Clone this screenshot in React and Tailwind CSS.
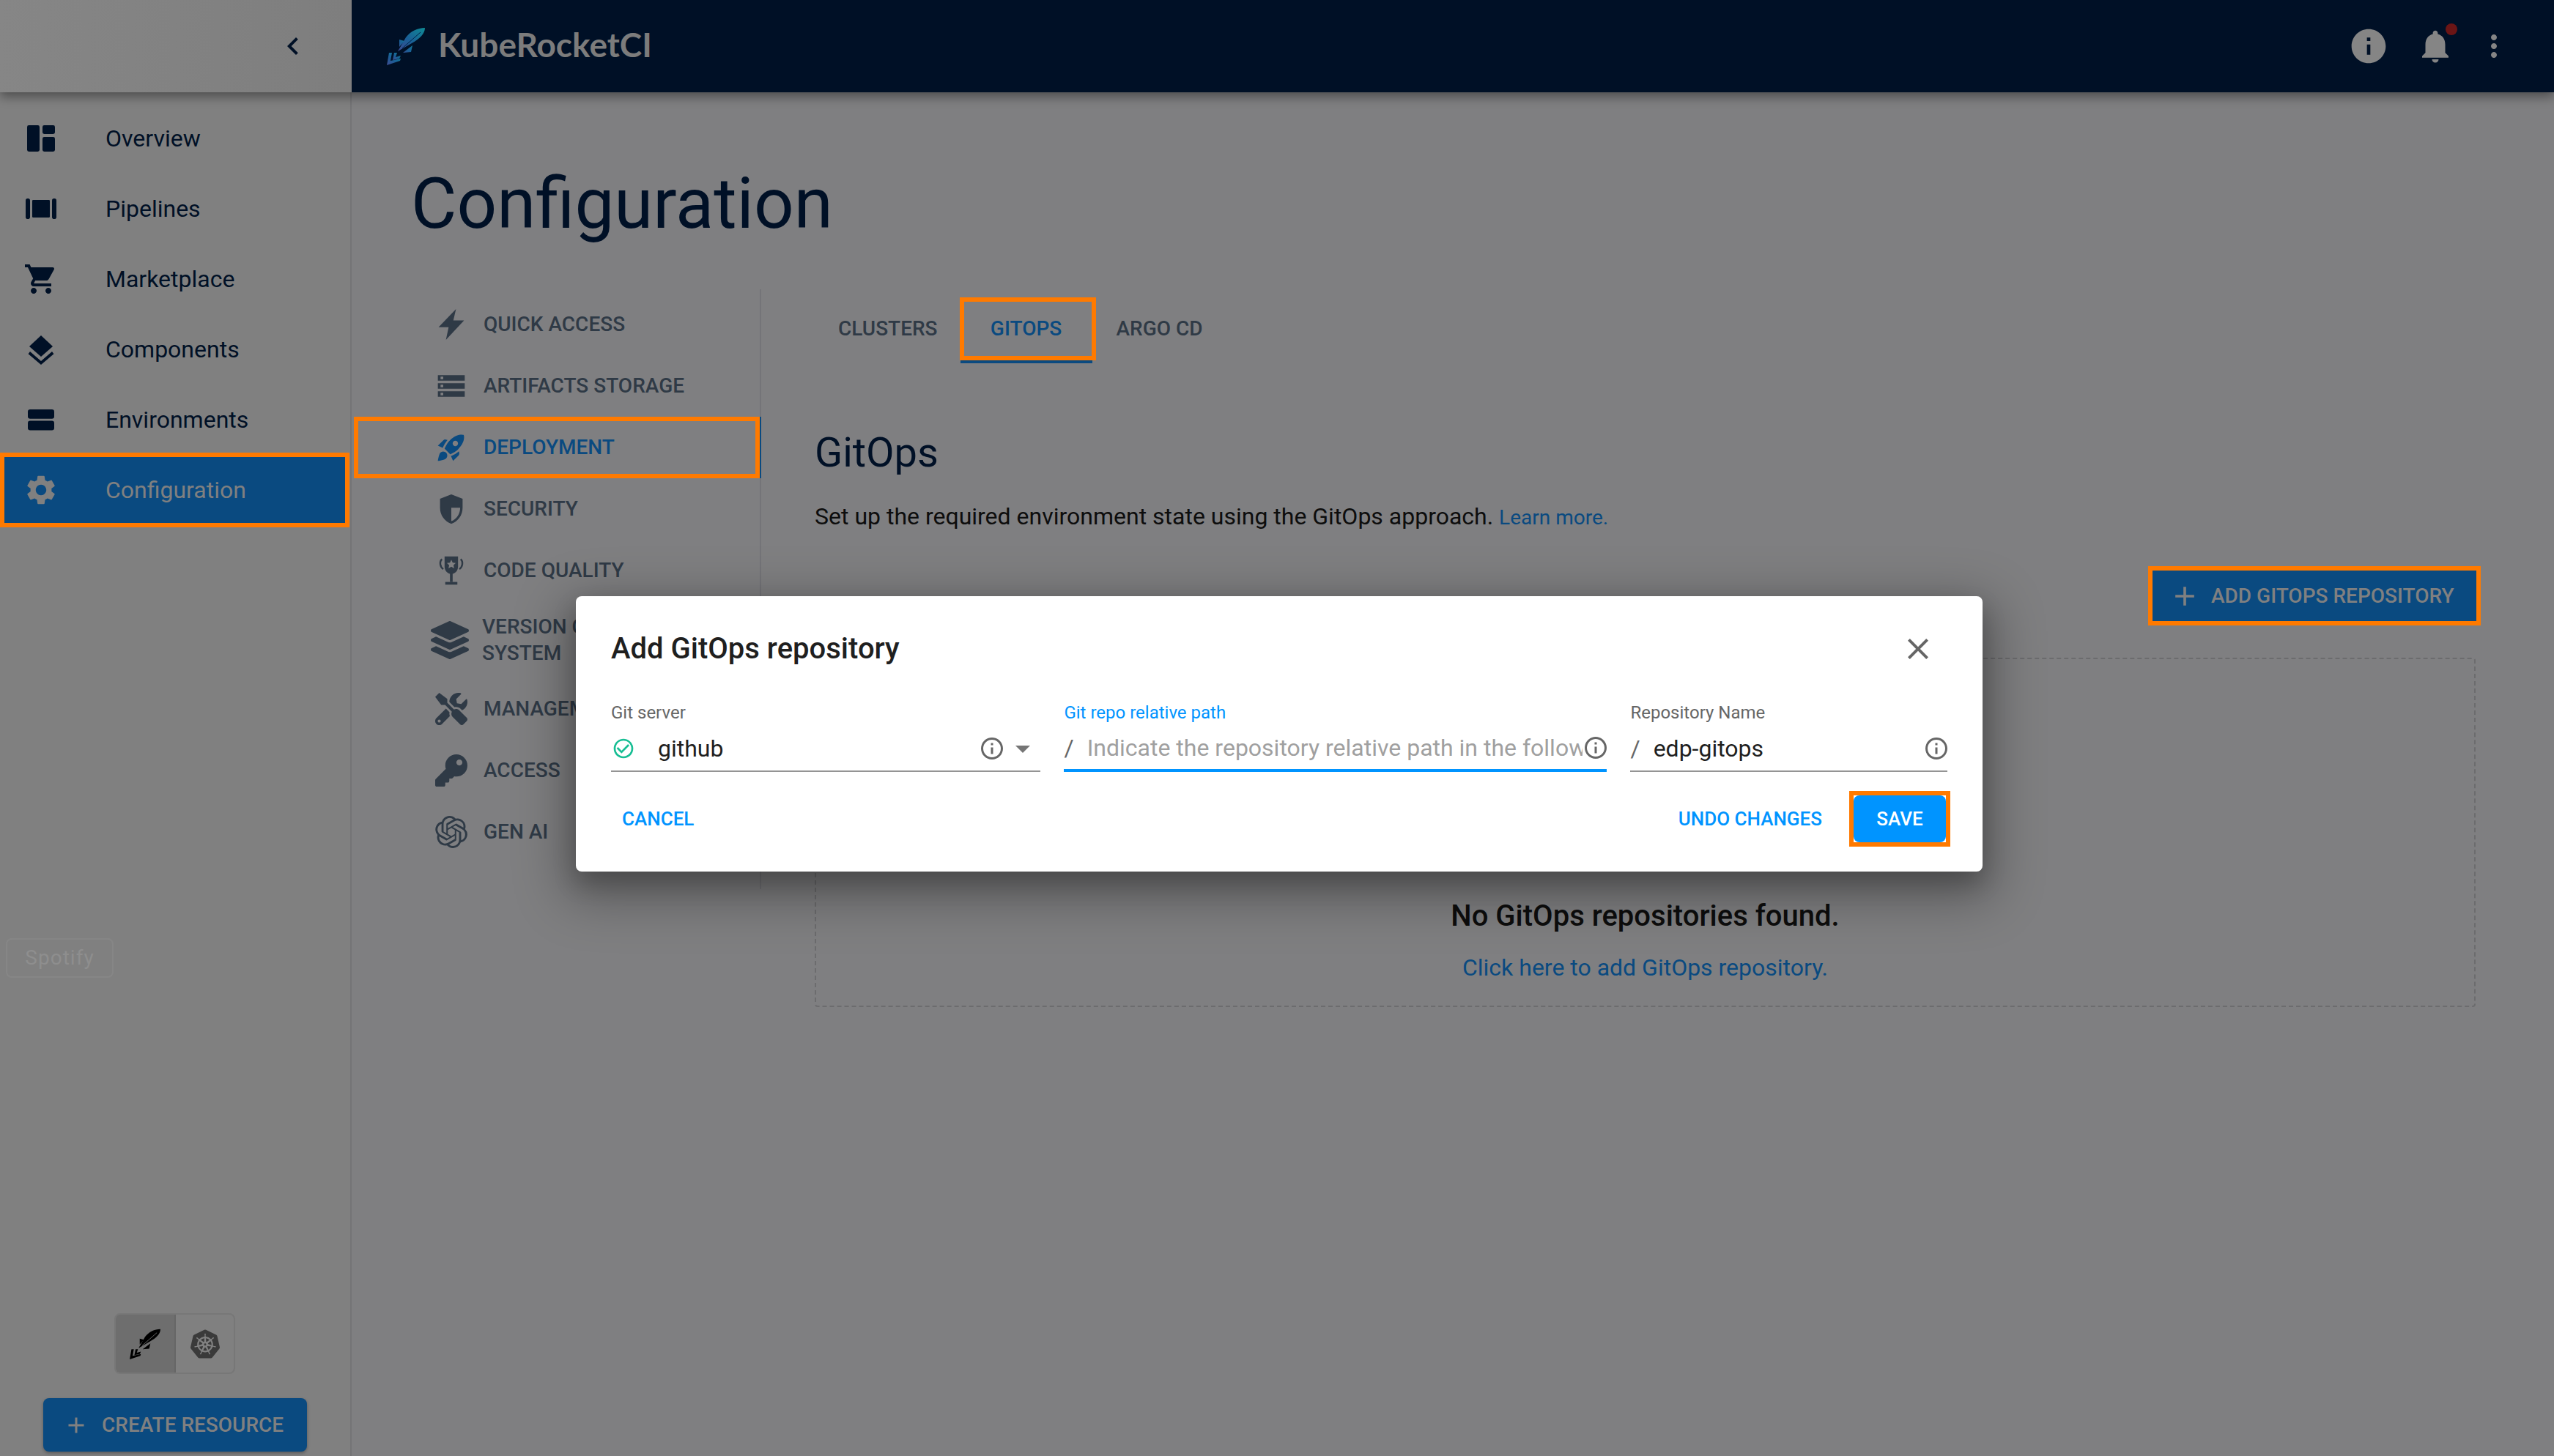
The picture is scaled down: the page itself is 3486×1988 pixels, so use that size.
// App.jsx — KubeRocketCI configuration page with the Add GitOps repository dialog open
import { MdAdd, MdCheckCircleOutline, MdChevronLeft, MdClose, MdInfo, MdInfoOutline, MdMoreVert, MdNotifications, MdRocketLaunch, MdSettings, MdShoppingCart, MdStorage, MdArrowDropDown } from 'react-icons/md';
import { FaKey, FaLayerGroup, FaTools } from 'react-icons/fa';
import { SiKubernetes, SiOpenai } from 'react-icons/si';

const DashboardIcon = ({ className }) => (
    <svg viewBox="0 0 24 24" fill="currentColor" className={className}>
        <rect x="2.5" y="3" width="8.5" height="18" rx="1.2" />
        <rect x="13" y="3" width="8.5" height="6" rx="1.2" />
        <rect x="13" y="11" width="8.5" height="10" rx="1.2" />
    </svg>
);

const PipelinesIcon = ({ className }) => (
    <svg viewBox="0 0 24 24" fill="currentColor" className={className}>
        <rect x="1.5" y="5" width="3" height="14" rx="1.4" />
        <rect x="6" y="6" width="12" height="12" rx="0.6" />
        <rect x="19.5" y="5" width="3" height="14" rx="1.4" />
    </svg>
);

const ComponentsIcon = ({ className }) => (
    <svg viewBox="0 0 24 24" fill="currentColor" className={className}>
        <path d="M12 2.5 20 10 12 17 4 10Z" />
        <path d="M4.5 13.5 12 20l7.5-6.5 1.2 1.6L12 22.5 3.3 15.1Z" />
    </svg>
);

const EnvironmentsIcon = ({ className }) => (
    <svg viewBox="0 0 24 24" fill="currentColor" className={className}>
        <rect x="3" y="5" width="18" height="6.4" rx="1.6" />
        <rect x="3" y="12.8" width="18" height="6.4" rx="1.6" />
    </svg>
);

const BoltIcon = ({ className }) => (
    <svg viewBox="0 0 24 24" fill="currentColor" className={className}>
        <path d="M15.500 0.500 2.500 14h7.500L8 23.500 21.500 9H13.500Z" />
    </svg>
);

const ShieldIcon = ({ className }) => (
    <svg viewBox="0 0 24 24" className={className}>
        <path d="M12 2 4.500 5v6c0 5 3 9.500 7.500 11 4.500-1.500 7.500-6 7.500-11V5Z" fill="none" stroke="currentColor" strokeWidth="1.800" />
        <path d="M12 2 4.500 5v6c0 5 3 9.500 7.500 11V11h7.500V5Z" fill="currentColor" />
    </svg>
);

const TrophyIcon = ({ className }) => (
    <svg viewBox="0 0 24 24" className={className}>
        <path d="M7 1.500h10V9c0 3.500-2.500 5.500-5 5.500S7 12.500 7 9Z" fill="currentColor" />
        <path d="M5 3.500C3 5.500 3.500 9 6 11M19 3.500c2 2 1.500 5.500-1 7.500" fill="none" stroke="currentColor" strokeWidth="1.300" />
        <rect x="11" y="14" width="2" height="6.500" fill="currentColor" />
        <rect x="7.500" y="20.500" width="9" height="2" fill="currentColor" />
        <path d="m12 4 1 2.200 2.300.2-1.700 1.600.5 2.300-2.100-1.200-2.100 1.200.5-2.300-1.700-1.600 2.300-.2Z" fill="#7f7f81" />
    </svg>
);

const RocketLogo = ({ className, mono }) => (
    <svg viewBox="0 0 52 52" className={className}>
        <defs>
            <linearGradient id="rocketFill" x1="1" y1="0" x2="0" y2="1">
                <stop offset="0" stopColor="#0f8a94" />
                <stop offset="0.55" stopColor="#1a5f96" />
                <stop offset="1" stopColor="#3f4a90" />
            </linearGradient>
        </defs>
        <g fill={mono ? '#000000' : 'url(#rocketFill)'}>
            <path d="M52 1C42 1 32 6 26 14L15 33l19-11C45 16 52 9 52 1Z" />
            <path d="M17 17l7 2-7 8ZM33 34l-11 1 13-10Z" />
            <path d="M3 35h4L5 46l14-3-1 3-18 6Z" />
            <path d="M10 35h4l-2 6 7-2-2 4-9 2Z" />
        </g>
        <path d="M21 29 46 7" stroke={mono ? '#7a7a7a' : '#00224a'} strokeWidth="1" />
    </svg>
);

const NAV_ITEMS = [
    { label: 'Overview', icon: DashboardIcon },
    { label: 'Pipelines', icon: PipelinesIcon },
    { label: 'Marketplace', icon: MdShoppingCart },
    { label: 'Components', icon: ComponentsIcon },
    { label: 'Environments', icon: EnvironmentsIcon },
];

const SUB_ITEMS = [
    { label: 'QUICK ACCESS', icon: BoltIcon },
    { label: 'ARTIFACTS STORAGE', icon: MdStorage },
    { label: 'DEPLOYMENT', icon: MdRocketLaunch, active: true },
    { label: 'SECURITY', icon: ShieldIcon },
    { label: 'CODE QUALITY', icon: TrophyIcon },
    { label: 'VERSION CONTROL SYSTEM', icon: FaLayerGroup, tall: true },
    { label: 'MANAGEMENT', icon: FaTools },
    { label: 'ACCESS', icon: FaKey },
    { label: 'GEN AI', icon: SiOpenai },
];

function Sidebar() {
    return (
        <aside className="w-[480px] shrink-0 h-full bg-[#808080] border-r-2 border-[#747476] flex flex-col">
            <nav className="flex flex-col pt-[15px]">
                {NAV_ITEMS.map(({ label, icon: Icon }) => (
                    <div key={label} className="h-[96px] flex items-center pl-[32px] text-[#001026]">
                        <Icon className="w-[48px] h-[48px]" />
                        <span className="ml-[64px] text-[32px]">{label}</span>
                    </div>
                ))}
                <div className="h-[102px] -mt-[3px] flex items-center pl-[26px] bg-[#0a4a80] border-[6px] border-[#ff7a00] text-[#808080] w-[477px]">
                    <MdSettings className="w-[48px] h-[48px]" />
                    <span className="ml-[64px] text-[32px]">Configuration</span>
                </div>
            </nav>

            <div className="flex-1 flex flex-col">
                <div className="mt-[561px] ml-[8px] w-[147px] h-[54px] rounded-lg border-2 border-[#868686] flex items-center justify-center">
                    <span className="text-[28px] tracking-[1px] text-[#8e8e8e]">Spotify</span>
                </div>
                <div className="mt-[458px] ml-[156px] w-[165px] h-[83px] flex rounded-lg border-2 border-[#777777] overflow-hidden">
                    <div className="w-[82px] bg-[#6e6e6e] border-r-2 border-[#666666] flex items-center justify-center">
                        <RocketLogo mono className="w-[42px] h-[42px]" />
                    </div>
                    <div className="flex-1 flex items-center justify-center text-[#3a3a3a]">
                        <SiKubernetes className="w-[40px] h-[40px]" />
                    </div>
                </div>
                <div className="mt-[33px] ml-[59px] w-[360px] h-[73px] rounded-lg bg-[#0a4a80] flex items-center pl-[27px] text-[#808080] shadow-[0_2px_4px_rgba(0,0,0,0.3)]">
                    <MdAdd className="w-[36px] h-[36px]" />
                    <span className="ml-[17px] text-[28px] font-medium">CREATE RESOURCE</span>
                </div>
            </div>
        </aside>
    );
}

function SubNav() {
    return (
        <div className="w-[556px] shrink-0 ml-[3px] border-r-2 border-[#747478] flex flex-col pt-[6px] pb-[36px]">
            {SUB_ITEMS.map(({ label, icon: Icon, active, tall }) => (
                <div
                    key={label}
                    className={`relative flex items-center text-[28px] font-medium ${tall ? 'h-[105px]' : 'h-[84px]'} ${active ? 'border-[6px] border-[#ff7a00] w-[554px] pl-[105px] text-[#0a4a80]' : 'pl-[111px] text-[#2f3a46]'}`}
                >
                    <Icon className={tall ? 'w-[52px] h-[52px] -ml-[6px] shrink-0' : 'w-[44px] h-[44px] shrink-0'} />
                    <span className={`w-[330px] leading-[36px] ${tall ? 'ml-[18px]' : 'ml-[22px] whitespace-nowrap'}`}>{label}</span>
                    {active && <div className="absolute -right-[8px] -top-[6px] -bottom-[6px] w-[2px] bg-[#0a4a80]" />}
                </div>
            ))}
        </div>
    );
}

function MainPanel() {
    return (
        <div className="flex-1 min-w-0 pl-[73px] pr-[107px]">
            <div className="flex items-start h-[90px] mt-[11px]">
                <div className="h-[86px] flex items-center justify-center pl-[32px] pr-[30px] text-[28px] font-medium text-[#2f3a46]">CLUSTERS</div>
                <div className="relative w-[186px] h-[86px] border-[6px] border-[#ff7a00] flex items-center justify-center text-[28px] font-medium text-[#0a4a80]">
                    <span className="-ml-[4px]">GITOPS</span>
                    <div className="absolute -left-[5px] -bottom-[10px] w-[180px] h-[4px] bg-[#0a4a80]" />
                </div>
                <div className="h-[86px] flex items-center justify-center px-[28px] text-[28px] font-medium text-[#2f3a46]">ARGO CD</div>
            </div>

            <h2 className="mt-[86px] text-[56px] leading-[72px] text-[#001026]">GitOps</h2>
            <p className="mt-[27px] text-[32px] leading-[48px] text-[#0d0d0d]">
                Set up the required environment state using the GitOps approach.{' '}
                <span className="text-[28px] text-[#0a4a80]">Learn more.</span>
            </p>

            <div className="flex justify-end -mr-[7px] mt-[42px]">
                <div className="w-[454px] h-[81px] bg-[#0a4a80] border-[6px] border-[#ff7a00] flex items-center pl-[22px] text-[#808080]">
                    <MdAdd className="w-[44px] h-[44px]" />
                    <span className="ml-[14px] text-[28px] font-medium">ADD GITOPS REPOSITORY</span>
                </div>
            </div>

            <div className="mt-[44px] h-[477px] border-2 border-dashed border-[#6c6c6e] rounded-sm flex flex-col items-center justify-end pb-[30px]">
                <div className="text-[40px] leading-[56px] font-medium text-[#0d0d0d]">No GitOps repositories found.</div>
                <div className="mt-[20px] text-[32px] leading-[44px] text-[#0a4a80]">Click here to add GitOps repository.</div>
            </div>
        </div>
    );
}

function AddRepoDialog() {
    return (
        <div className="absolute left-[786px] top-[814px] w-[1920px] h-[376px] bg-white rounded-lg px-[48px] pt-[43px] shadow-[0_22px_70px_16px_rgba(0,0,0,0.3),0_16px_32px_rgba(0,0,0,0.2)]">
            <div className="flex items-center justify-between h-[58px]">
                <h3 className="text-[40px] font-medium text-[#1f1f1f]">Add GitOps repository</h3>
                <MdClose className="w-[48px] h-[48px] mr-[16px] text-[#666666]" />
            </div>

            <div className="flex gap-[32px] mt-[40px]">
                <div className="w-[587px]">
                    <div className="text-[24px] leading-[36px] text-[#666666]">Git server</div>
                    <div className="h-[48px] mt-[7px] box-content flex items-center border-b-2 border-[#949494] pb-[6px]">
                        <MdCheckCircleOutline className="w-[32px] h-[32px] ml-[1px] text-[#18be94]" />
                        <span className="ml-[31px] flex-1 text-[32px] text-[#1f1f1f]">github</span>
                        <MdInfoOutline className="w-[36px] h-[36px] text-[#666666]" />
                        <MdArrowDropDown className="w-[48px] h-[48px] text-[#757575]" />
                    </div>
                </div>
                <div className="w-[741px]">
                    <div className="text-[24px] leading-[36px] text-[#0094ff]">Git repo relative path</div>
                    <div className="h-[46px] mt-[7px] box-content flex items-center border-b-4 border-[#0094ff] pb-[6px]">
                        <span className="text-[32px] text-[#666666]">/</span>
                        <span className="ml-[18px] flex-1 min-w-0 overflow-hidden whitespace-nowrap text-[32px] text-[#a0a0a0]">Indicate the repository relative path in the following format: /organization/repository</span>
                        <MdInfoOutline className="w-[36px] h-[36px] -mr-[3px] shrink-0 text-[#666666]" />
                    </div>
                </div>
                <div className="w-[433px]">
                    <div className="text-[24px] leading-[36px] text-[#666666]">Repository Name</div>
                    <div className="h-[48px] mt-[7px] box-content flex items-center border-b-2 border-[#949494] pb-[6px]">
                        <span className="text-[32px] text-[#666666]">/</span>
                        <span className="ml-[18px] flex-1 text-[32px] text-[#1f1f1f]">edp-gitops</span>
                        <MdInfoOutline className="w-[36px] h-[36px] -mr-[3px] text-[#666666]" />
                    </div>
                </div>
            </div>

            <div className="flex items-center justify-between mt-[26px]">
                <span className="ml-[15px] text-[26px] font-medium text-[#0094ff]">CANCEL</span>
                <div className="flex items-center -mr-[4px]">
                    <span className="text-[26px] font-medium text-[#0094ff]">UNDO CHANGES</span>
                    <div className="ml-[37px] w-[138px] h-[76px] border-[6px] border-[#ff7a00] bg-white">
                        <div className="w-full h-full rounded-lg bg-[#0094ff] flex items-center justify-center text-[26px] font-medium text-white">SAVE</div>
                    </div>
                </div>
            </div>
        </div>
    );
}

function App() {
    return (
        <div className="relative w-[3486px] h-[1988px] overflow-hidden flex flex-col bg-[#7f7f81] font-['Roboto',sans-serif]">
            <header className="relative z-10 h-[126px] shrink-0 flex shadow-[0_6px_14px_rgba(0,0,0,0.4)]">
                <div className="w-[480px] bg-linear-to-r from-[#868686] to-[#7e7e7e] flex items-center justify-end pr-[56px] text-[#001026]">
                    <MdChevronLeft className="w-[48px] h-[48px]" />
                </div>
                <div className="flex-1 bg-[#001026] flex items-center pl-[48px] pr-[58px]">
                    <RocketLogo className="w-[52px] h-[52px]" />
                    <span className="ml-[18px] -mt-[5px] text-[46px] font-['Lato',sans-serif] font-bold text-[#7c7c7c]">KubeRocketCI</span>
                    <div className="flex-1" />
                    <MdInfo className="w-[56px] h-[56px] text-[#858585]" />
                    <div className="relative ml-[36px]">
                        <MdNotifications className="w-[54px] h-[54px] text-[#858585]" />
                        <div className="absolute -top-[4px] right-[-3px] w-[16px] h-[16px] rounded-full bg-[#6b1515]" />
                    </div>
                    <MdMoreVert className="w-[48px] h-[48px] ml-[29px] text-[#858585]" />
                </div>
            </header>

            <div className="flex-1 min-h-0 flex">
                <Sidebar />
                <div className="flex-1 min-w-0 flex flex-col">
                    <h1 className="ml-[81px] mt-[96px] text-[96px] leading-[112px] text-[#001026]">Configuration</h1>
                    <div className="flex items-start mt-[61px]">
                        <SubNav />
                        <MainPanel />
                    </div>
                </div>
            </div>

            <AddRepoDialog />
        </div>
    );
}

export default App;
